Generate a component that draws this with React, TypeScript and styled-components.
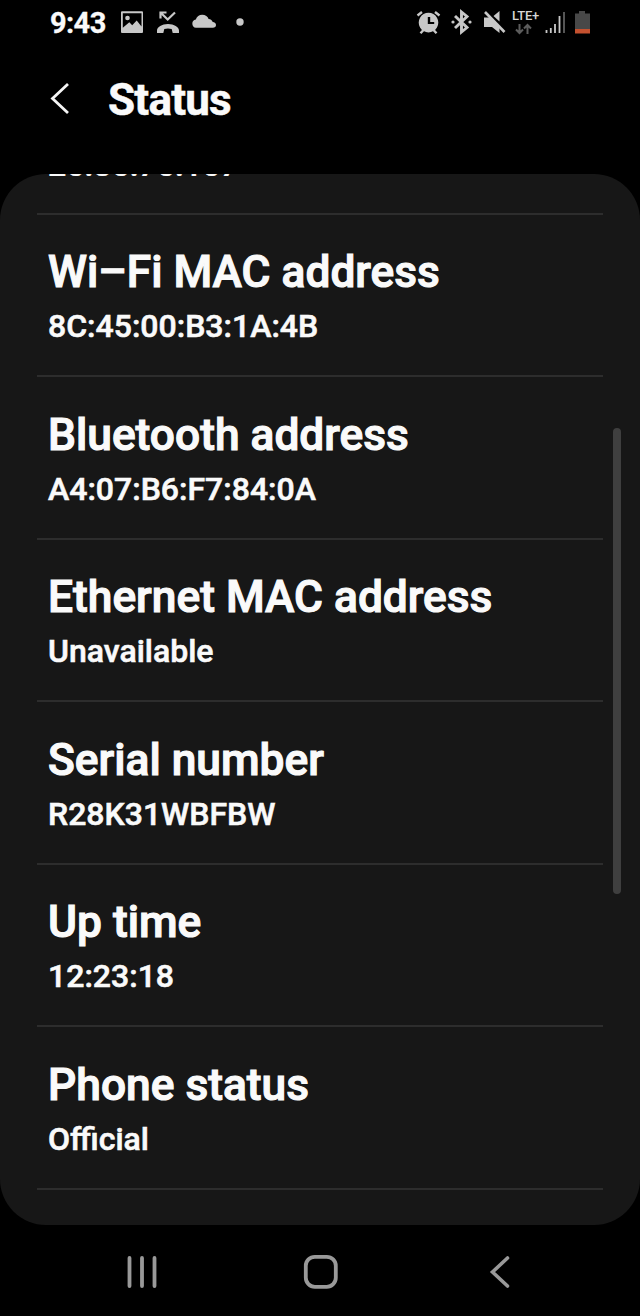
import React from "react";
import styled, { createGlobalStyle } from "styled-components";

const Global = createGlobalStyle`
  * { box-sizing: border-box; }
  body { margin: 0; background: #000; font-family: Roboto, sans-serif; color: #fafafa; }
`;

const Screen = styled.div`
  width: 640px;
  height: 1316px;
  display: flex;
  flex-direction: column;
  background: #000;
  overflow: hidden;
`;

const StatusBar = styled.div`
  height: 46px;
  flex: none;
  display: flex;
  justify-content: space-between;
  padding: 0 46px 0 50px;
`;

const Clock = styled.span`
  width: 70px;
  font-size: 29px;
  line-height: 46px;
  font-weight: 700;
  letter-spacing: -0.6px;
  -webkit-text-stroke: 0.3px currentColor;
`;

const IconGroup = styled.div`
  display: flex;
  height: 46px;
`;

const Network = styled.div`
  width: 32px;
  padding-top: 8px;
  display: flex;
  flex-direction: column;
  align-items: flex-start;
  font-size: 13px;
  line-height: 15px;
  font-weight: 500;
  letter-spacing: -0.2px;
  color: #d6d6d6;

  svg {
    margin-left: 3px;
  }
`;

const Header = styled.header`
  height: 128px;
  flex: none;
  display: flex;
  align-items: flex-start;
  padding: 26px 0 0 48px;
`;

const BackButton = styled.button`
  width: 60px;
  height: 54px;
  padding: 0;
  border: 0;
  background: none;
  text-align: left;
`;

const PageTitle = styled.h1`
  margin: 0;
  font-size: 44px;
  line-height: 56px;
  font-weight: 700;
  letter-spacing: -0.8px;
  -webkit-text-stroke: 0.5px currentColor;
`;

const Panel = styled.main`
  position: relative;
  height: 1051px;
  flex: none;
  padding: 0 37px;
  border-radius: 46px;
  background: #171717;
`;

const ScrolledValue = styled.div`
  height: 38.6px;
  padding-left: 11px;
`;

const ClipWindow = styled.div`
  height: 2px;
  overflow: hidden;
  display: flex;
  align-items: flex-end;
  font-size: 32px;
  line-height: 22px;
  font-weight: 500;
  -webkit-text-stroke: 0.5px currentColor;
`;

const Row = styled.section`
  height: 162.5px;
  padding: 31.5px 0 0 11px;
  border-top: 2px solid #2d2d2d;
`;

const Label = styled.h2`
  margin: 0;
  font-size: 44.3px;
  line-height: 52px;
  font-weight: 500;
  -webkit-text-stroke: 1.1px currentColor;
  white-space: nowrap;
`;

const Value = styled.p`
  margin: 0;
  font-size: 32px;
  line-height: 56px;
  font-weight: 500;
  -webkit-text-stroke: 0.6px currentColor;
`;

const ScrollThumb = styled.div`
  position: absolute;
  top: 254px;
  right: 19px;
  width: 8px;
  height: 466px;
  border-radius: 4px;
  background: #3f3f3f;
`;

const NavBar = styled.nav`
  height: 91px;
  flex: none;
  display: flex;
  justify-content: space-between;
  align-items: center;
  padding: 2px 120px 0 122px;
`;

const rows = [
  ["Wi\u2013Fi MAC address", "8C:45:00:B3:1A:4B"],
  ["Bluetooth address", "A4:07:B6:F7:84:0A"],
  ["Ethernet MAC address", "Unavailable"],
  ["Serial number", "R28K31WBFBW"],
  ["Up time", "12:23:18"],
  ["Phone status", "Official"],
];

const NotificationIcons = () => (
  <svg width="130" height="46" viewBox="120 0 130 46" fill="#c8c8c8">
    <path fillRule="evenodd" d="M122 11.300h20a1 1 0 0 1 1 1v19.700a1 1 0 0 1-1 1h-20a1 1 0 0 1-1-1V12.300a1 1 0 0 1 1-1zm.8 1.900v14.600l6.500-5.500 2.900 3 4.500-4.800 4.800 6V13.200z" />
    <circle cx="127.500" cy="18" r="2.300" />
    <path d="M157 33v-2.500c0-3.500 5-6.500 11-6.500s11 3 11 6.500V33h-6.300l-1-4c-2.500-.7-5-.7-7.400 0l-1 4z" />
    <path d="M160.500 18.500v-6h6M160.500 12.500l7.200 7 7.300-7" fill="none" stroke="#c8c8c8" strokeWidth="2.200" />
    <path d="M196 27.700a4.200 4.200 0 0 1-.2-8.300c1-3 3.300-4.700 6.400-4.700 3.200 0 5.600 2 6.400 4.200 2.200.1 3.700 1.400 4.100 3.200 2 .3 3.300 1.400 3.300 2.900 0 1.700-1.300 2.700-3.200 2.700z" />
    <circle cx="240" cy="22" r="3.700" />
  </svg>
);

const SystemIcons = () => (
  <svg width="96" height="46" viewBox="416 0 96 46" fill="#c8c8c8">
    <path fillRule="evenodd" d="M428.500 12.800a9.800 9.800 0 1 0 .01 0zM427.800 17h2.400v5h4v2h-6.400z" />
    <path d="M417.500 15.500l4.500-3.500M439.500 15.500l-4.500-3.500M420.500 33.300l3-3.300M436.500 33.300l-3-3.300" stroke="#c8c8c8" strokeWidth="2.400" />
    <path d="M455 16l12 11.500-5.500 4.500V12l5.500 4.500L455 28" fill="none" stroke="#c8c8c8" strokeWidth="2.900" />
    <circle cx="453" cy="22" r="1.600" /><circle cx="470" cy="22" r="1.600" />
    <path d="M484 17.500h6l9.500 10V33l-7.500-6h-8zM493.500 16l6-5v10.500z" />
    <path d="M485 12l19.500 20" stroke="#c8c8c8" strokeWidth="2.600" />
  </svg>
);

const DataArrows = () => (
  <svg width="18" height="12" viewBox="0 0 18 12" fill="none" stroke="#5c5c5c" strokeWidth="2">
    <path d="M4.500 1v9M1 6.500L4.500 10 8 6.500M12.500 11V2M9 5.500L12.500 2 16 5.500" />
  </svg>
);

const SignalBattery = () => (
  <svg width="50" height="46" viewBox="544 0 50 46">
    <path d="M546.500 33v-3M550.800 33v-5M555 33v-9M559.500 33V16" stroke="#c8c8c8" strokeWidth="1.800" />
    <path d="M564 33V12" stroke="#555" strokeWidth="2" />
    <path d="M575 13.500h4V11h6v2.500h5V29h-15z" fill="#484848" />
    <path d="M575 29h15v4.500h-15z" fill="#c4512f" />
  </svg>
);

export default function App() {
  return (
    <Screen>
      <Global />
      <StatusBar>
        <IconGroup>
          <Clock>9:43</Clock>
          <NotificationIcons />
        </IconGroup>
        <IconGroup>
          <SystemIcons />
          <Network>
            LTE+
            <DataArrows />
          </Network>
          <SignalBattery />
        </IconGroup>
      </StatusBar>
      <Header>
        <BackButton aria-label="Back">
          <svg width="30" height="54" viewBox="0 0 30 54">
            <path d="M20 12L4.500 26.500L20 41" fill="none" stroke="#f5f5f5" strokeWidth="2.800" />
          </svg>
        </BackButton>
        <PageTitle>Status</PageTitle>
      </Header>
      <Panel>
        <ScrolledValue>
          <ClipWindow>26.86.76.167</ClipWindow>
        </ScrolledValue>
        {rows.map(([label, value]) => (
          <Row key={label}>
            <Label>{label}</Label>
            <Value>{value}</Value>
          </Row>
        ))}
        <Row />
        <ScrollThumb />
      </Panel>
      <NavBar>
        <svg width="40" height="40" viewBox="122 1252 40 40">
          <path d="M129.500 1258v28M142 1258v28M154.500 1258v28" stroke="#999" strokeWidth="3.800" strokeLinecap="round" />
        </svg>
        <svg width="40" height="40" viewBox="301 1252 40 40">
          <rect x="305.800" y="1256.800" width="30" height="30" rx="9" fill="none" stroke="#999" strokeWidth="3.800" />
        </svg>
        <svg width="40" height="40" viewBox="480 1252 40 40">
          <path d="M507.500 1258l-15 14 15 14" fill="none" stroke="#999" strokeWidth="3.600" strokeLinecap="round" />
        </svg>
      </NavBar>
    </Screen>
  );
}
